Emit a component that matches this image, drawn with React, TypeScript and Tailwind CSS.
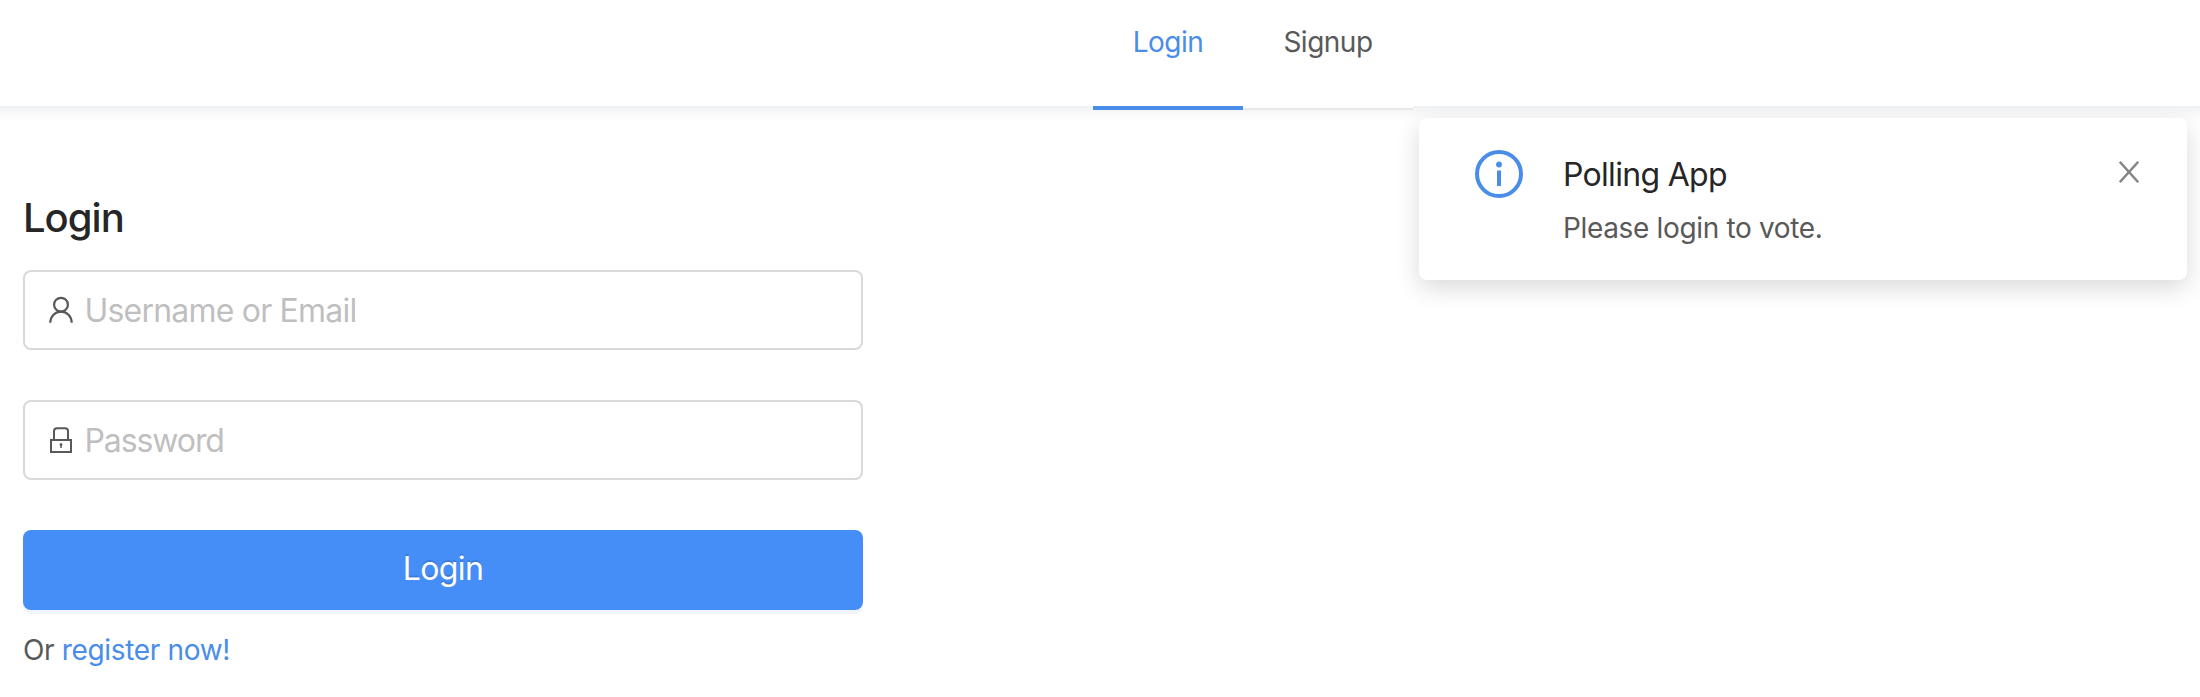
import React from 'react';

function UserIcon() {
  return (
    <svg className="block h-7 w-7" viewBox="0 0 28 28" fill="none" stroke="#595959" strokeWidth="2.200">
      <circle cx="14" cy="8.700" r="6.900" />
      <path d="M3.200 26.700C3.600 20.100 8 15.600 14 15.600s10.400 4.500 10.800 11.100" />
    </svg>
  );
}

function LockIcon() {
  return (
    <svg className="block h-7 w-7" viewBox="0 0 28 28" fill="none" stroke="#595959" strokeWidth="2">
      <path d="M7 14V5.200a3 3 0 0 1 3-3h8a3 3 0 0 1 3 3V14" />
      <path d="M4 14h20v12H4z" />
      <path d="M14 17.700v4.200" strokeWidth="1.500" />
      <circle cx="14" cy="18.700" r="1.400" fill="#595959" stroke="none" />
    </svg>
  );
}

function Field({ icon, placeholder, type, tracking }: { icon: React.ReactNode; placeholder: string; type: string; tracking: string }) {
  return (
    <label className="flex h-20 items-center rounded-lg border-2 border-[#d9d9d9] bg-white pl-[22px]">
      {icon}
      <input
        type={type}
        placeholder={placeholder}
        className={`ml-[9.5px] h-full min-w-0 flex-1 bg-transparent text-[32px] text-[#595959] outline-none placeholder:text-[#bfbfbf] ${tracking}`}
      />
    </label>
  );
}

export default function App() {
  return (
    <div className="relative h-[697px] w-[2200px] overflow-hidden bg-white font-['Inter',sans-serif] text-[28px] text-[#595959]">
      <header className="-mx-10 h-[106px] bg-white px-10 shadow-[0_4px_14px_#ebecef]">
        <nav className="ml-[1093px] flex h-[110px] w-[320px] tracking-[-0.5px]">
          <a className="flex w-[150px] justify-center border-b-4 border-[#4a8de8] bg-white pt-[21px] leading-[42px] text-[#4a8de8]">Login</a>
          <a className="flex w-[170px] justify-center border-b-2 border-[#e8e8e8] bg-white pt-[21px] leading-[42px]">Signup</a>
        </nav>
      </header>

      <main className="w-[863px] pl-[23px] pt-[83px]">
        <h1 className="mb-[23px] text-[40px] leading-[58px] font-[450] tracking-[-1px] text-[#262626]">Login</h1>
        <form className="flex flex-col gap-[50px]">
          <Field icon={<UserIcon />} placeholder="Username or Email" type="text" tracking="tracking-[-0.8px]" />
          <Field icon={<LockIcon />} placeholder="Password" type="password" tracking="tracking-[-1.1px]" />
          <button
            type="button"
            className="h-20 rounded-lg bg-[#458ef7] pb-[2px] text-[32px] tracking-[-0.6px] text-white shadow-[0_4px_0_rgba(24,80,160,0.06)] [text-shadow:0_-2px_0_rgba(0,0,0,0.12)]"
          >
            Login
          </button>
        </form>
        <p className="mt-[19px] leading-[42px] tracking-[-0.34px]">
          Or <a className="text-[#4a8de8]">register now!</a>
        </p>
      </main>

      <aside className="absolute top-[118px] left-[1419px] flex h-[162px] w-[768px] items-start rounded-lg bg-white pt-8 pr-[48px] pl-[56px] shadow-[0_8px_24px_rgba(0,0,0,0.15)]">
        <svg className="h-12 w-12" viewBox="0 0 48 48" fill="#4a8de8">
          <circle cx="24" cy="24" r="22" fill="none" stroke="#4a8de8" strokeWidth="4" />
          <circle cx="24" cy="14.500" r="2.900" />
          <path d="M22 20.500h4v15.500h-4z" />
        </svg>
        <div className="ml-10 flex-1 pt-px">
          <h2 className="text-[32px] leading-[48px] tracking-[-0.7px] text-[#262626]">Polling App</h2>
          <p className="mt-2 leading-[42px] tracking-[-0.34px]">Please login to vote.</p>
        </div>
        <svg className="mt-[11px] h-[22px] w-5" viewBox="0 0 20 22" fill="none" stroke="#858585" strokeWidth="2.400">
          <path d="M.8.800 19.200 21.200M19.200.800.800 21.200" />
        </svg>
      </aside>
    </div>
  );
}
